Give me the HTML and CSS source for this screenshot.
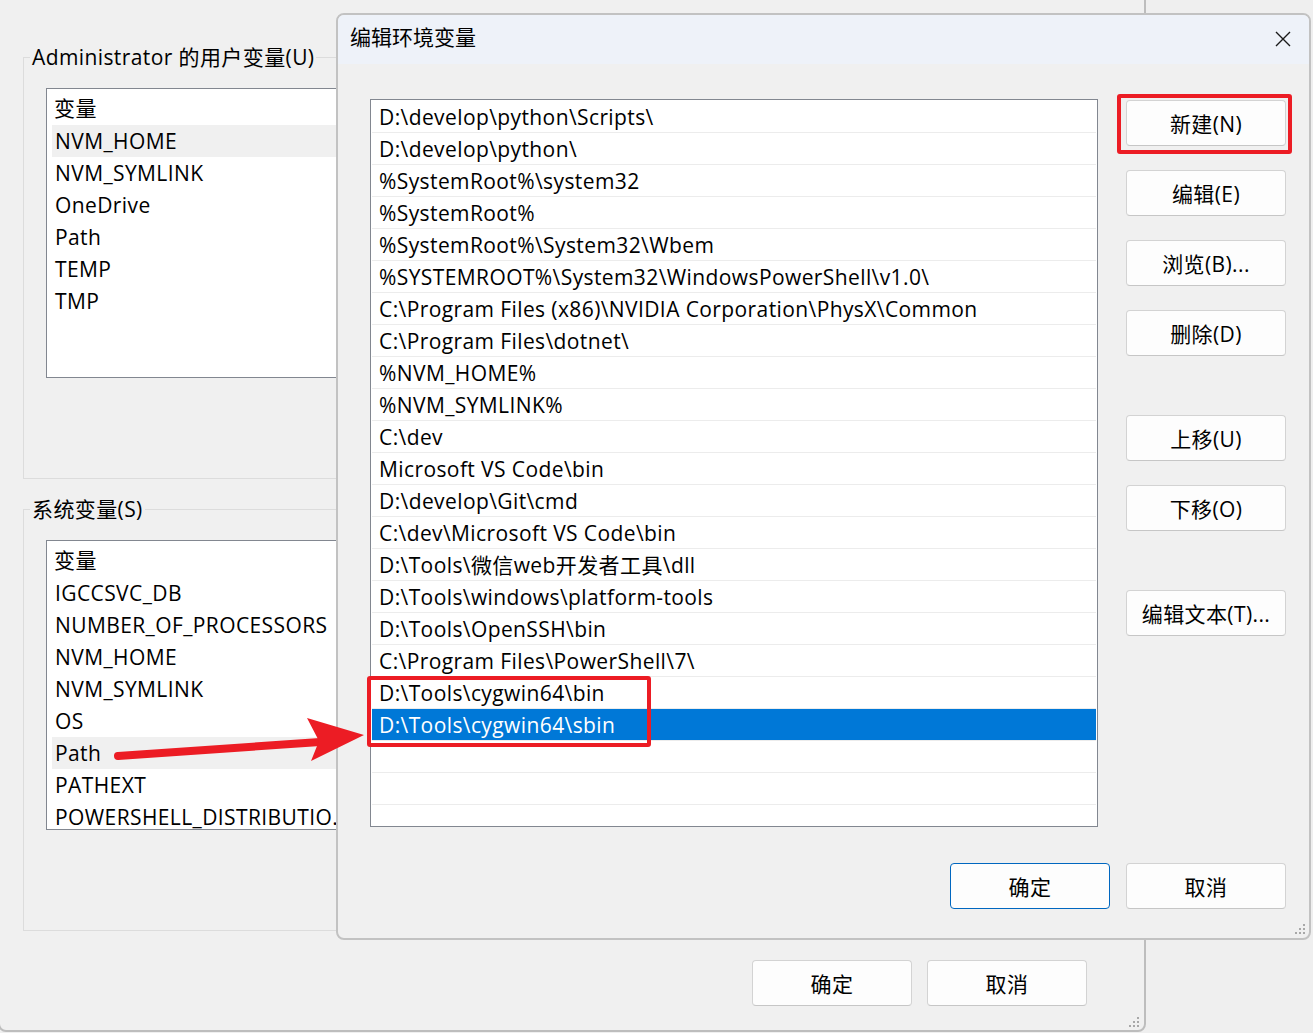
FILE: index.html
```html
<!DOCTYPE html>
<html lang="zh-CN">
<head>
<meta charset="utf-8">
<title>编辑环境变量</title>
<link rel="stylesheet" href="styles.css">
</head>
<body>
<div class="bgwin">
  <fieldset class="group">
    <legend>Administrator 的用户变量(U)</legend>
    <div class="varlist">
      <div class="vhead">变量</div>
      <div class="vrow hl">NVM_HOME</div>
      <div class="vrow">NVM_SYMLINK</div>
      <div class="vrow">OneDrive</div>
      <div class="vrow">Path</div>
      <div class="vrow">TEMP</div>
      <div class="vrow">TMP</div>
    </div>
  </fieldset>
  <fieldset class="group g2">
    <legend>系统变量(S)</legend>
    <div class="varlist">
      <div class="vhead">变量</div>
      <div class="vrow">IGCCSVC_DB</div>
      <div class="vrow">NUMBER_OF_PROCESSORS</div>
      <div class="vrow">NVM_HOME</div>
      <div class="vrow">NVM_SYMLINK</div>
      <div class="vrow">OS</div>
      <div class="vrow hl">Path</div>
      <div class="vrow">PATHEXT</div>
      <div class="vrow">POWERSHELL_DISTRIBUTIO…</div>
    </div>
  </fieldset>
  <div class="bgfoot">
    <div class="btn">确定</div>
    <div class="btn">取消</div>
  </div>
  <svg class="grip grip-bg" width="11" height="11" viewBox="0 0 11 11"><rect x="8" y="0" width="2" height="2"/><rect x="4" y="4" width="2" height="2"/><rect x="8" y="4" width="2" height="2"/><rect x="0" y="8" width="2" height="2"/><rect x="4" y="8" width="2" height="2"/><rect x="8" y="8" width="2" height="2"/></svg>
</div>

<div class="dialog">
  <div class="titlebar">
    <span class="title">编辑环境变量</span>
    <div class="close"><svg width="16" height="16" viewBox="0 0 16 16"><path d="M1 1 L15 15 M15 1 L1 15" stroke="#1a1a1a" stroke-width="1.4" fill="none"/></svg></div>
  </div>
  <div class="dbody">
    <div class="pathlist">
      <div class="prow">D:\develop\python\Scripts\</div>
      <div class="prow">D:\develop\python\</div>
      <div class="prow">%SystemRoot%\system32</div>
      <div class="prow">%SystemRoot%</div>
      <div class="prow">%SystemRoot%\System32\Wbem</div>
      <div class="prow">%SYSTEMROOT%\System32\WindowsPowerShell\v1.0\</div>
      <div class="prow">C:\Program Files (x86)\NVIDIA Corporation\PhysX\Common</div>
      <div class="prow">C:\Program Files\dotnet\</div>
      <div class="prow">%NVM_HOME%</div>
      <div class="prow">%NVM_SYMLINK%</div>
      <div class="prow">C:\dev</div>
      <div class="prow">Microsoft VS Code\bin</div>
      <div class="prow">D:\develop\Git\cmd</div>
      <div class="prow">C:\dev\Microsoft VS Code\bin</div>
      <div class="prow">D:\Tools\微信web开发者工具\dll</div>
      <div class="prow">D:\Tools\windows\platform-tools</div>
      <div class="prow">D:\Tools\OpenSSH\bin</div>
      <div class="prow">C:\Program Files\PowerShell\7\</div>
      <div class="prow">D:\Tools\cygwin64\bin</div>
      <div class="prow sel">D:\Tools\cygwin64\sbin</div>
      <div class="prow"></div>
      <div class="prow"></div>
    </div>
    <div class="btncol">
      <div class="btn">新建(N)</div>
      <div class="btn">编辑(E)</div>
      <div class="btn">浏览(B)...</div>
      <div class="btn">删除(D)</div>
      <div class="btn sp">上移(U)</div>
      <div class="btn">下移(O)</div>
      <div class="btn sp">编辑文本(T)...</div>
    </div>
  </div>
  <div class="dfoot">
    <div class="btn primary">确定</div>
    <div class="btn">取消</div>
  </div>
  <svg class="grip grip-dlg" width="11" height="11" viewBox="0 0 11 11"><rect x="8" y="0" width="2" height="2"/><rect x="4" y="4" width="2" height="2"/><rect x="8" y="4" width="2" height="2"/><rect x="0" y="8" width="2" height="2"/><rect x="4" y="8" width="2" height="2"/><rect x="8" y="8" width="2" height="2"/></svg>
</div>

<div class="redbox rb-new"></div>
<div class="redbox rb-rows"></div>
<svg class="arrow" width="1313" height="1033" viewBox="0 0 1313 1033">
  <path d="M118 756 L320 742" stroke="#ec1c24" stroke-width="8" stroke-linecap="round" fill="none"/>
  <path d="M307 718 L364 735 L311 761 L319 741 Z" fill="#ec1c24"/>
</svg>
</body>
</html>
```
FILE: styles.css
```css
* { box-sizing: border-box; }
html, body { margin: 0; padding: 0; }
body {
  width: 1313px;
  height: 1033px;
  overflow: hidden;
  position: relative;
  background: #efefef;
  font-family: "Open Sans", "Noto Sans CJK SC", sans-serif;
  font-size: 21px;
  letter-spacing: 0.4px;
  color: #000;
}

/* background window */
.bgwin {
  position: absolute;
  left: -2px;
  top: -2px;
  width: 1148px;
  height: 1034px;
  border: 2px solid #bdbdbd;
  border-radius: 0 0 8px 8px;
  background: #f0f0f0;
  padding-top: 43px;
}
.group {
  margin: 0 0 0 23px;
  padding: 0 0 100px 0;
  border: 1px solid #dcdcdc;
  width: 1100px;
  min-width: 0;
}
.group legend {
  margin-left: 6px;
  padding: 0 2px;
  line-height: 28px;
}
.g2 { margin-top: 16px; }
.varlist {
  margin: 17px 0 0 22px;
  height: 290px;
  border: 1px solid #828790;
  background: #fff;
  padding-left: 5px;
  overflow: hidden;
}
.vhead { height: 36px; line-height: 38px; padding-left: 2px; }
.vrow {
  height: 32px;
  line-height: 33px;
  padding-left: 3px;
  white-space: nowrap;
}
.vrow.hl { background: #f0f0f0; }
.bgfoot {
  display: flex;
  justify-content: flex-end;
  gap: 15px;
  margin-top: 29px;
  padding-right: 57px;
}

.btn {
  width: 160px;
  height: 46px;
  background: #fdfdfd;
  border: 1px solid #d3d3d3;
  border-bottom-color: #c6c6c6;
  border-radius: 4px;
  display: flex;
  align-items: center;
  justify-content: center;
  white-space: nowrap;
}
.btn.primary { border-color: #0067c0; }

.grip { position: absolute; fill: #a8a8a8; }
.grip-bg { right: 4px; bottom: 2px; }
.grip-dlg { right: 3px; bottom: 3px; }

/* dialog */
.dialog {
  position: absolute;
  left: 336px;
  top: 13px;
  width: 975px;
  height: 927px;
  border: 2px solid #c2c2c2;
  border-radius: 8px;
  background: #f0f0f0;
  overflow: hidden;
}
.titlebar {
  height: 49px;
  background: #eef2f9;
  display: flex;
  align-items: flex-start;
  justify-content: space-between;
  padding: 0 3px 0 12px;
}
.title {
  margin-top: 8px;
  line-height: 28px;
  letter-spacing: 0;
}
.close {
  width: 46px;
  height: 47px;
  display: flex;
  align-items: center;
  justify-content: center;
}
.dbody {
  display: grid;
  grid-template-columns: 728px 160px;
  column-gap: 28px;
  padding: 35px 23px 0 32px;
}
.pathlist {
  height: 728px;
  border: 1px solid #828790;
  background: #fff;
  padding: 1px;
  overflow: hidden;
}
.prow {
  height: 32px;
  line-height: 33px;
  border-bottom: 1px solid #ececec;
  padding-left: 7px;
  white-space: nowrap;
}
.prow.sel { background: #0078d7; color: #fff; }
.btncol {
  display: flex;
  flex-direction: column;
  gap: 24px;
  padding-top: 1px;
}
.btncol .sp { margin-top: 35px; }
.dfoot {
  display: flex;
  justify-content: flex-end;
  gap: 16px;
  padding: 36px 23px 0 0;
}

/* annotations */
.redbox {
  position: absolute;
  border: 4px solid #ec1c24;
  border-radius: 3px;
}
.rb-new { left: 1117px; top: 94px; width: 175px; height: 60px; }
.rb-rows { left: 367px; top: 676px; width: 284px; height: 71px; }
.arrow { position: absolute; left: 0; top: 0; pointer-events: none; }
```
